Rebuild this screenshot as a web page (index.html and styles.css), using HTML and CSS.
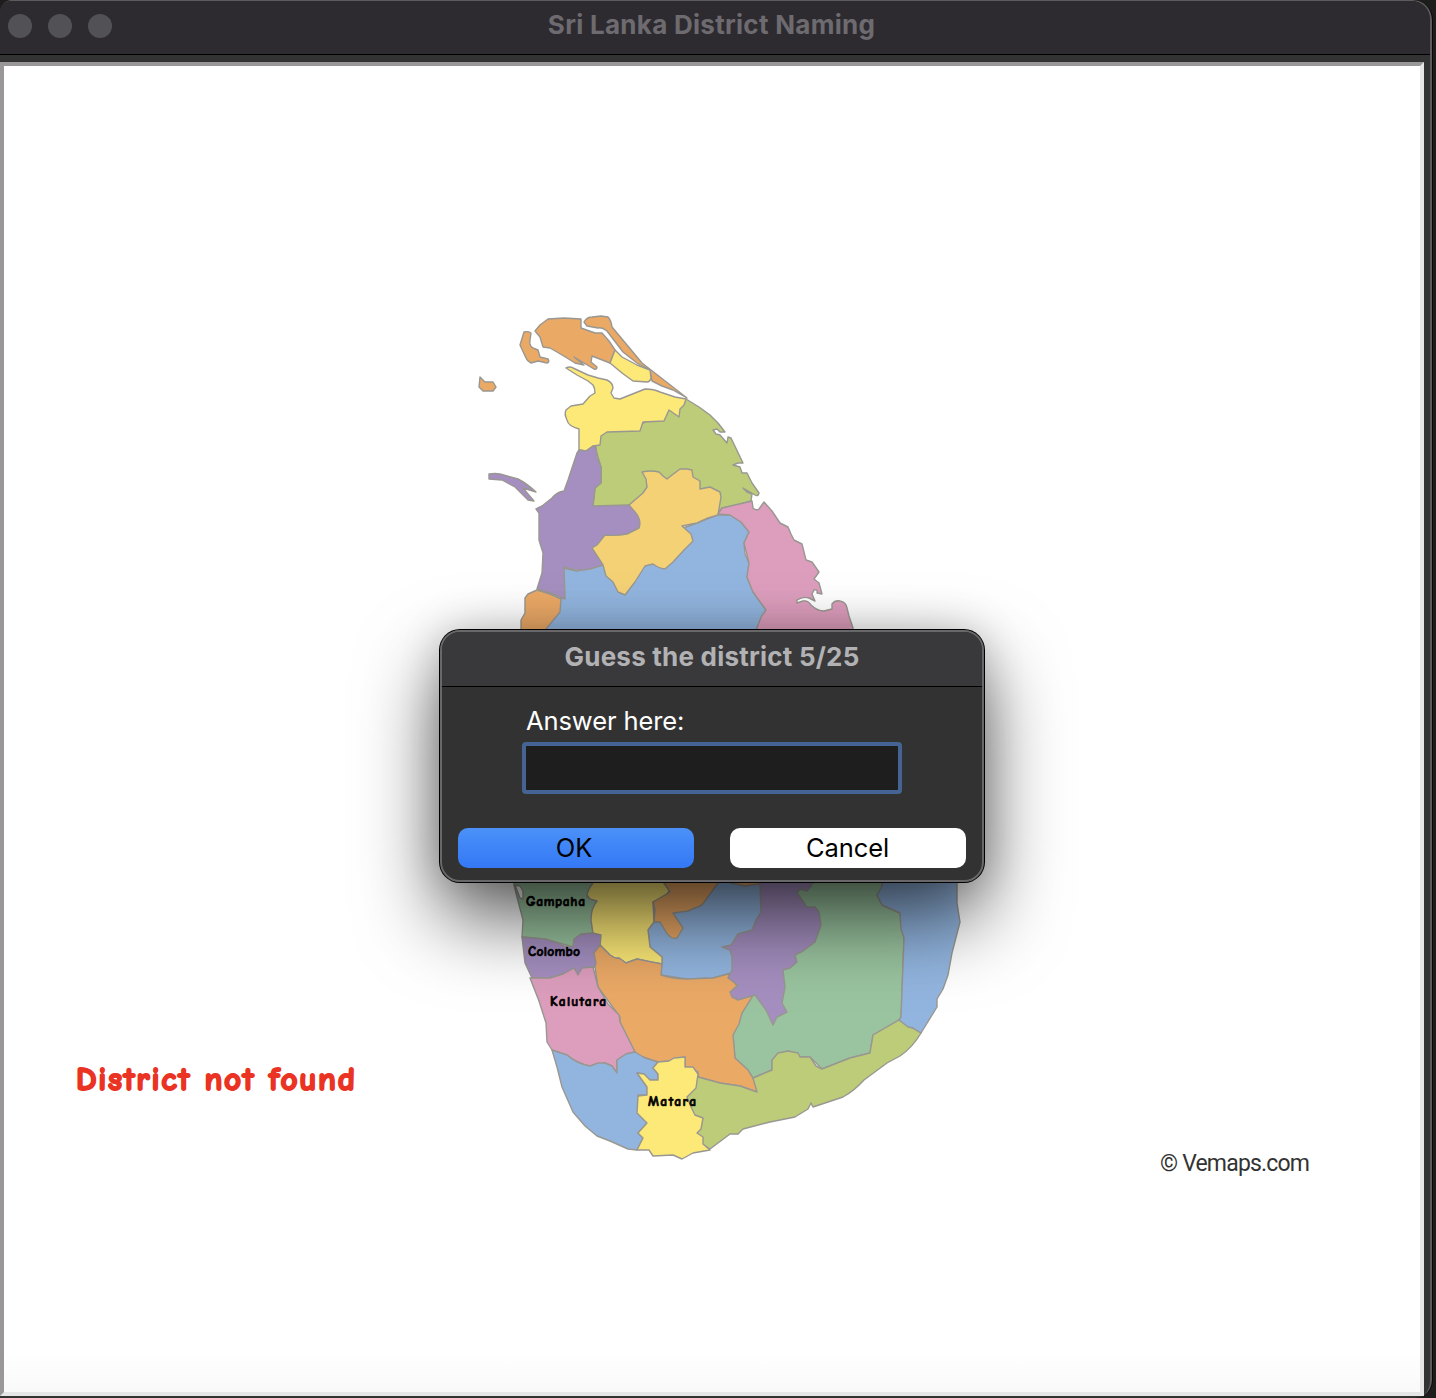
FILE: index.html
```html
<!DOCTYPE html>
<html lang="en">
<head>
<meta charset="utf-8">
<title>Sri Lanka District Naming</title>
<link rel="stylesheet" href="styles.css">
</head>
<body>
<main class="window">
  <header class="titlebar">
    <div class="lights"><i></i><i></i><i></i></div>
    <h1>Sri Lanka District Naming</h1>
  </header>
  <section class="canvas">
    <svg class="map" viewBox="4 66 1416 1326">
      <g class="districts">
        <path class="orange" d="M535 331L540 325 548 319 564 318 581 319 581 328 595 333H602L609 341 615 350 610 363 592 356 591 362 597 367Q597 370 594 369L574 357 584 365 575 363 567 358 557 352 550 348 543 347 540 337Z"/>
        <path class="orange" d="M584 322Q587 317 592 317L601 316 608 317Q611 320 612 327L642 363 687 398 673 390 662 386 652 381 650 370 637 363 623 352 607 331Q602 327 598 328L587 326Z"/>
        <path class="yellow" d="M615 350L622 357 637 365 650 370 651 378Q650 382 647 382L633 381 622 373 610 363Z"/>
        <path class="orange" d="M524 332Q528 331 531 333L530 340Q529 346 533 348L538 350 540 357 548 359Q550 362 547 363L538 361 531 363Q527 361 526 358L520 345Z"/>
        <path class="orange" d="M480 377L485 382 493 382 496 387 493 391H483L479 387Z"/>
        <path class="green" d="M686 399L699 407 710 415 718 423 725 432 720 432 717 429 713 430 716 434 720 435 727 443 728 437 731 438 743 463 738 463 733 465 740 467 742 473H747L752 483 759 493Q758 497 755 495L743 488 747 492 752 494 751 501 735 506 722 508 717 515 629 530 593 506 595 488 601 483V467L595 447 600 435 607 428 640 425Z"/>
        <path class="yellow" d="M566 368Q570 366 573 368L588 375 598 378 607 380Q613 383 613 388L611 393 614 398 620 399 630 395 645 389Q654 389 660 392L675 397 686 399 684 405 680 409 679 417 669 410 664 421 643 422 640 431 607 432 601 436 600 445 593 446 586 451 579 450V429Q568 426 567 420 564 414 566 410L571 406 583 404 590 396 595 393Q595 388 593 385L588 381 577 375Z"/>
        <path class="blue" d="M558 567L577 571 603 565 650 540 697 523 717 515H730L741 522 749 532 744 543 745 554 749 563 747 577 753 592 766 610 757 628V645H546V629L558 611 561 599Z"/>
        <path class="purple" d="M577 453L579 450 586 451 593 446 596 447 597 458 601 467V483L595 488 593 506 629 505 645 515 640 530 615 550 603 565 590 569Q577 572 564 567L565 599 550 593 537 589 542 573 543 553 539 540 539 513 536 509 542 506 552 498Q557 492 564 491L568 480Z"/>
        <path class="tan" d="M642 472Q651 470 659 472L663 476 667 479 672 475 680 469 687 469 692 470 693 477 700 481 700 489 710 487 720 492 721 497 718 515 708 518 697 523 682 526 691 534 693 541 684 550 673 562 665 569Q658 568 653 564L645 566 635 582 625 595 618 592 613 582 606 576 603 565 592 548 597 545 605 535Q617 536 627 534L639 528Q642 520 635 512L629 505 643 493 647 487 646 479Z"/>
        <path class="purple" d="M489 474Q495 473 500 474L518 479Q526 483 536 492L523 488 528 494 534 501 528 500 515 487 502 480 489 479Z"/>
        <path class="orange" d="M537 590L528 594 525 598V613L521 620V645H546V629L560 612 561 599 550 594Z"/>
        <path class="pink" d="M718 514L722 508 752 501 753 508Q756 511 759 509L764 502 772 511 780 523 788 527 791 534 794 540 802 544 806 560 812 562 819 572 814 579 819 583 822 594 817 593Q818 589 814 590L812 594 815 601 809 598Q803 596 797 600V603L803 601Q808 600 811 605 817 611 824 611L832 609V604Q835 600 840 601 846 602 847 608L849 616 853 628V645H757V628L761 617 766 610 753 592 747 577 749 563 744 543 749 532 741 522 730 515Z"/>

        <path class="sage" d="M757 870H882V888L877 895 882 905 900 913 904 938 901 1017 899 1020 873 1035 870 1053 850 1058 822 1069 810 1057 800 1057 788 1051 772 1060V1070L753 1078 748 1070 735 1058 733 1035 742 1013 752 997Z"/>
        <path class="sage" d="M514 870V885L517 897 523 920 522 937 545 939 573 947 577 937 593 933 591 920 597 901 587 897 593 883V870Z"/>
        <path class="lagoon" d="M515 885L520 886 523 891V899L520 898Z"/>
        <path class="blue" d="M652 900L648 930 650 947 662 957 661 975 687 979 713 978 728 974 745 968 780 870H690Z"/>
        <path class="yellow" d="M593 870V883Q588 889 587 895L590 899 597 901Q591 908 591 920L593 933 600 945 610 955Q615 959 619 958L626 963 637 959 650 962 662 964V957L650 947 648 930 654 922 653 902 664 898 670 890 664 883V870Z"/>
        <path class="orange" d="M664 870V883L670 892 653 902 655 910 654 922 660 922 666 932Q671 940 677 938L683 928 673 913 688 911 702 905 718 883V870Z"/>
        <path class="orange" d="M730 875V883L745 886 760 884V875Z"/>
        <path class="purple" d="M522 937L545 939 558 943Q566 948 573 947L574 939 581 934 593 933 601 935 600 947 594 953 596 963 595 967 582 968 581 974 578 975 574 968 563 974 550 978H532L525 963Z"/>
        <path class="orange" d="M600 945L610 955Q615 959 619 958L626 963 637 959 662 964 661 975Q673 979 687 979L713 978 728 974 740 990 752 997 742 1013 739 1024 733 1035 735 1058 748 1070 757 1085V1092L740 1086 720 1083 698 1077 698 1072 685 1067V1057L669 1061 658 1062 640 1056 635 1052 620 1022V1017L598 987 595 967 596 963 594 953Z"/>
        <path class="pink" d="M530 978L550 978 563 974 574 968 578 975 582 968 593 967 598 987 608 1004 619 1015 620 1022 635 1052 626 1054 617 1060V1073L612 1066 605 1063 590 1066Q577 1063 567 1055L552 1050 547 1042 546 1023 539 1001Z"/>
        <path class="blue" d="M552 1050L567 1055Q577 1064 590 1066L598 1063 605 1063 612 1066 617 1073V1060L626 1054 635 1052 645 1058 658 1062 653 1068 658 1074V1080L650 1080 644 1074 637 1073 647 1087V1095H638V1113L647 1123 638 1133 643 1138 637 1150 628 1149 610 1141 597 1136 585 1126 573 1112 562 1087 557 1067Z"/>
        <path class="green" d="M698 1077L720 1083 740 1086 757 1092 753 1078 772 1070V1060L778 1053 788 1051 798 1053 800 1057H810L816 1066 822 1069 850 1058 870 1053 873 1035 899 1020 921 1033Q913 1047 900 1056L887 1063 864 1080Q854 1091 843 1097L813 1107 811 1103 808 1109 795 1117 770 1122 743 1129 738 1134H730L710 1149 695 1140 687 1097Z"/>
        <path class="yellow" d="M658 1062L669 1061 674 1058 685 1057V1067L693 1067 698 1074 696 1088 687 1097 691 1107 695 1115 703 1118 701 1129 697 1133 703 1137V1144L710 1150 693 1153 682 1159 673 1155 653 1156 649 1150H637L643 1138 638 1133 647 1123 637 1113 638 1096 647 1095V1087L637 1073 644 1074 650 1080 658 1080V1074L653 1068Z"/>
        <path class="purple" d="M760 870V883L761 912 756 920 752 930 738 934 731 945 722 947 730 950 732 957V970L728 978 738 985 730 992 732 997 738 1000 755 995 766 1010 773 1025 777 1017 787 1012 782 1003 785 987 783 970 790 968 797 962 795 955 803 951 815 942 821 925 819 912 815 907H807L797 893 800 889 807 891 813 883V870Z"/>
        <path class="blue" d="M882 870V886L877 895 882 905 900 913 901 929 904 938 901 1017 899 1020 908 1027 913 1028 921 1033 937 1007 937 999 943 989 948 975 952 953 960 922 957 903V870Z"/>
      </g>
      <g class="labels">
        <text x="526" y="906" textLength="59">Gampaha</text>
        <text x="528" y="956" textLength="52">Colombo</text>
        <text x="550" y="1006" textLength="56">Kalutara</text>
        <text x="648" y="1106" textLength="48">Matara</text>
      </g>
      <text class="message" x="76" y="1090" textLength="279">District not found</text>
      <text class="credit" x="1160" y="1171" textLength="150">© Vemaps.com</text>
    </svg>
  </section>
</main>
<form class="dialog">
  <h2>Guess the district 5/25</h2>
  <div class="dialog-body">
    <div class="field">
      <label for="answer">Answer here:</label>
      <input id="answer" type="text">
    </div>
    <div class="actions">
      <button class="ok" type="button">OK</button>
      <button class="cancel" type="button">Cancel</button>
    </div>
  </div>
</form>
</body>
</html>
```
FILE: styles.css
```css
* { box-sizing: border-box; }
body {
  margin: 0;
  height: 1398px;
  overflow: hidden;
  position: relative;
  background: #1d1d1c;
  font-family: Inter, "Liberation Sans", sans-serif;
}
.window {
  width: 1433px;
  height: 1398px;
  display: flex;
  flex-direction: column;
  background: #333333;
  border-right: 1px solid #080808;
  border-radius: 12px 20px 18px 0;
  box-shadow: inset -2px 1px 0 #5c5b5d;
}
.titlebar {
  height: 54px;
  flex: none;
  display: grid;
  grid-template-columns: 1fr auto 1fr;
  align-items: center;
  margin: 1px 2px 0 0;
  padding: 0 15px 3px 8px;
  background: #2d2b30;
  border-bottom: 1px solid #000;
  border-radius: 12px 18px 0 0;
}
.lights { display: flex; gap: 16px; }
.lights i { width: 24px; height: 24px; border-radius: 50%; background: #525156; }
h1, h2 { margin: 0; font-weight: 700; white-space: nowrap; }
h1 { padding-bottom: 2px; font-size: 26px; line-height: 48px; color: #6d6b70; letter-spacing: 0.28px; }
.canvas {
  width: 1424px;
  height: 1334px;
  margin-top: 7px;
  border: 4px solid;
  border-color: #999797 #e6e6e6 #e6e6e6 #999797;
  background: linear-gradient(#fff 97%, #f9f9f9);
}
.map { display: block; width: 1416px; height: 1326px; }
.districts path { stroke: #999791; stroke-width: 1.4; stroke-linejoin: round; }
.districts .orange { fill: #eba966; }
.districts .yellow { fill: #fce977; }
.districts .green { fill: #bdcc78; }
.districts .purple { fill: #a58fc0; }
.districts .tan { fill: #f4d175; }
.districts .blue { fill: #92b5df; }
.districts .pink { fill: #dd9ebd; }
.districts .sage { fill: #9ac49f; }
.districts .lagoon { fill: #fff; }
.labels, .message {
  font-family: "Comic Sans MS", "Comic Neue", Lato, sans-serif;
  font-weight: 900;
  stroke-linejoin: round;
}
.labels { font-size: 13.5px; fill: #000; stroke: #000; stroke-width: 0.7; }
.message { font-size: 33px; fill: #ea3323; stroke: #ea3323; stroke-width: 1.9; }
.credit { font: 23px Roboto, sans-serif; fill: #333; }
.dialog {
  position: absolute;
  left: 440px;
  top: 630px;
  width: 544px;
  height: 252px;
  display: flex;
  flex-direction: column;
  border: 2px solid #68686a;
  border-radius: 20px;
  background: #323232;
  overflow: hidden;
  box-shadow: 0 0 0 1px #000, 0 36px 80px rgba(0, 0, 0, 0.64), 0 0 40px rgba(0, 0, 0, 0.18);
}
h2 {
  height: 55px;
  flex: none;
  background: #39393b;
  border-bottom: 1px solid #000;
  color: #b2b2b4;
  font-size: 26px;
  line-height: 50px;
  letter-spacing: 0.22px;
  text-align: center;
}
.dialog-body { display: flex; flex-direction: column; justify-content: space-between; flex: 1; padding: 16px 16px 12px; }
.field { display: flex; flex-direction: column; width: 380px; margin-left: 64px; }
label { color: #fff; font-size: 25.5px; line-height: 36px; padding-left: 4px; letter-spacing: -0.1px; }
input { width: 380px; height: 52px; margin-top: 3px; border: 4px solid #456493; border-radius: 4px; background: #1e1e1e; }
.actions { display: flex; gap: 36px; }
button { width: 236px; height: 40px; padding: 0 4px 2px 0; border: 0; border-radius: 10px; font: 25.5px Inter, sans-serif; letter-spacing: -0.1px; color: #000; }
.cancel { padding-right: 1px; }
.ok { background: linear-gradient(#4b91f8, #3478f6); }
.cancel { background: #fff; }
```
